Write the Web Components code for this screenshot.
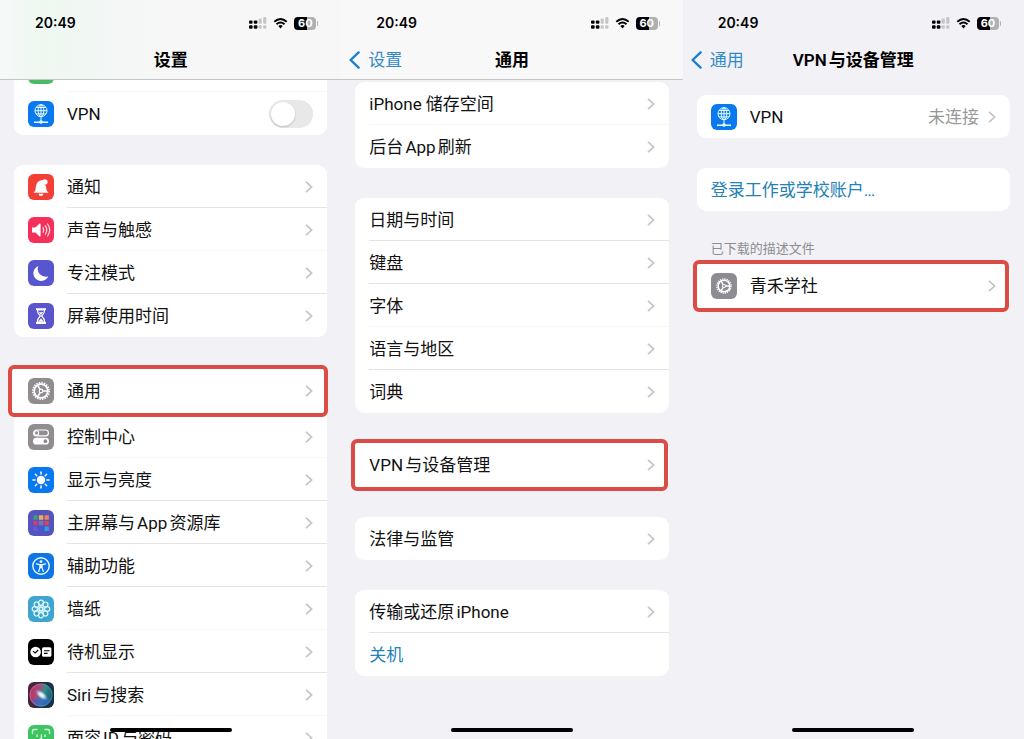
<!DOCTYPE html>
<html lang="zh-CN">
<head>
<meta charset="utf-8">
<meta name="viewport" content="width=device-width, initial-scale=1">
<title>设置</title>
<style>
    body {
        margin: 0;
        display: grid;
        grid-template-columns: repeat(3, 1fr);
        height: 100vh;
        overflow: hidden;
        background: #f2f1f6;
        color: #111;
        font: 17px/22px Roboto, "Noto Sans CJK SC", sans-serif;
        text-autospace: normal;
    }
</style>
</head>
<body>
    <phone-screen style="--list-top: -31px; --bar: linear-gradient(90deg, #f7f9f8, #eef8f1 12%, #f5f7f6 36%, #f7f7f7 60%, #f7f7f8); --line: #c6c6c9">
        <nav-bar slot="bar" title-text="设置"></nav-bar>
        <settings-group>
            <settings-row icon="green" soft></settings-row>
            <settings-row icon="vpn" type="toggle">VPN</settings-row>
        </settings-group>
        <settings-group>
            <settings-row icon="bell">通知</settings-row>
            <settings-row icon="sound" soft>声音与触感</settings-row>
            <settings-row icon="moon">专注模式</settings-row>
            <settings-row icon="hourglass">屏幕使用时间</settings-row>
        </settings-group>
        <settings-group style="--marked-height: 48px; --mark-inset: -2px -1px -2px -6px">
            <settings-row icon="gear" marked>通用</settings-row>
            <settings-row icon="switches" soft>控制中心</settings-row>
            <settings-row icon="sun">显示与亮度</settings-row>
            <settings-row icon="apps">主屏幕与App资源库</settings-row>
            <settings-row icon="access">辅助功能</settings-row>
            <settings-row icon="flower" soft>墙纸</settings-row>
            <settings-row icon="standby">待机显示</settings-row>
            <settings-row icon="siri" soft>Siri与搜索</settings-row>
            <settings-row icon="face">面容ID与密码</settings-row>
        </settings-group>
    </phone-screen>

    <phone-screen style="--list-top: 2px; --bar: #f8f8f9; --line: #c6c6c9">
        <nav-bar slot="bar" title-text="通用" back="设置"></nav-bar>
        <settings-group>
            <settings-row soft>iPhone 储存空间</settings-row>
            <settings-row>后台App刷新</settings-row>
        </settings-group>
        <settings-group>
            <settings-row>日期与时间</settings-row>
            <settings-row>键盘</settings-row>
            <settings-row soft>字体</settings-row>
            <settings-row>语言与地区</settings-row>
            <settings-row>词典</settings-row>
        </settings-group>
        <settings-group>
            <settings-row marked>VPN与设备管理</settings-row>
        </settings-group>
        <settings-group>
            <settings-row>法律与监管</settings-row>
        </settings-group>
        <settings-group>
            <settings-row>传输或还原iPhone</settings-row>
            <settings-row type="action">关机</settings-row>
        </settings-group>
    </phone-screen>

    <phone-screen style="--list-top: 15px">
        <nav-bar slot="bar" title-text="VPN与设备管理" back="通用"></nav-bar>
        <settings-group>
            <settings-row icon="vpn" value="未连接">VPN</settings-row>
        </settings-group>
        <settings-group>
            <settings-row type="action">登录工作或学校账户…</settings-row>
        </settings-group>
        <settings-group caption="已下载的描述文件">
            <settings-row icon="cog" marked>青禾学社</settings-row>
        </settings-group>
    </phone-screen>

<script>
const petals = [0, 45, 90, 135, 180, 225, 270, 315];

const gear = (scale) => `
    <g transform="translate(13 13) scale(${scale})" fill="none" stroke="#fff">
        <circle r="8.2" stroke-width="1.6" stroke-dasharray="1.5 1.08"/>
        <circle r="6.8" stroke-width="1.7"/>
        <circle r="1.8" stroke-width="1.2"/>
        <path d="M1.8 0H6.6M-.9 1.6L-3.3 5.7M-.9-1.6L-3.3-5.7" stroke-width="1.5"/>
    </g>`;

const ICONS = {
    green: ['#4fb868', ''],
    vpn: ['#0a78ee', `
        <g fill="none" stroke="#e6ffff" stroke-width="1">
            <circle cx="13" cy="9.7" r="6"/>
            <ellipse cx="13" cy="9.7" rx="2.8" ry="6"/>
            <path d="M7 9.7h12M8.1 6.5h9.8M8.1 12.9h9.8M13 3.7v17"/>
            <path d="M6 21.2h14" stroke-width="1.4"/>
        </g>
        <circle cx="13" cy="21" r="1.8" fill="#e6ffff"/>`],
    bell: ['#f43f37', `
        <path d="M5.4 18.8c2.2-1.8 2-3.4 2.5-6.4.5-3.3 2-5.4 4.6-6 1.2-.4 2.3-.2 3.2.1a3.9 3.9 0 0 0 2.2 5.3c.3 3.6.7 5.2 2.7 7z" fill="#fff"/>
        <path d="M10.6 19.8h4.8a2.4 2.2 0 0 1-4.8 0z" fill="#fff"/>
        <circle cx="16.8" cy="8" r="2.8" fill="#fff"/>`],
    sound: ['#f5305b', `
        <path d="M4 10.4h3.4l4.2-3.8c.5-.4 1-.2 1 .4v12c0 .6-.5.8-1 .4l-4.2-3.8H4z" fill="#fff"/>
        <g fill="none" stroke="#fff" stroke-linecap="round" stroke-width="1.2" opacity=".85">
            <path d="M15 10.7q1.6 2.3 0 4.6M17.3 8.8q3 4.2 0 8.4M19.6 7q4.2 6 0 12"/>
        </g>`],
    moon: ['#5856ce', '<path d="M10.4 6a7.7 7.7 0 0 0 9.8 10.2A7.7 7.7 0 1 1 10.4 6z" fill="#fff"/>'],
    hourglass: ['#5a55cc', `
        <path d="M8 5.2h10v1.9H8zM8 19h10v1.9H8z" fill="#fff"/>
        <path d="M9.4 7c0 3.4 1.1 4.3 2.9 6-1.8 1.7-2.9 2.6-2.9 6h7.2c0-3.4-1.1-4.3-2.9-6 1.8-1.7 2.9-2.6 2.9-6z" fill="none" stroke="#fff" stroke-width="1.2"/>
        <path d="M10.8 9.2h4.4L13 12zM10.5 18.5l2.5-3.2 2.5 3.2z" fill="#fff"/>`],
    gear: ['#918c90', gear(1)],
    cog: ['#8e8c93', gear(.86)],
    switches: ['#918c90', `
        <rect x="5.6" y="6" width="14.8" height="5.8" rx="2.9" fill="none" stroke="#fff" stroke-width="1.2"/>
        <circle cx="8.5" cy="8.9" r="2.1" fill="none" stroke="#fff" stroke-width="1.1"/>
        <rect x="5" y="13.8" width="16" height="6.8" rx="3.4" fill="#fff"/>
        <circle cx="17.4" cy="17.2" r="1.9" fill="#918c90"/>`],
    sun: ['#0a78ee', `
        <circle cx="13" cy="13" r="4.2" fill="#fff"/>
        <g stroke="#fff" stroke-width="1.5" stroke-linecap="round">
            ${petals.map(a => `<path d="M13 5v2" transform="rotate(${a} 13 13)"/>`).join('')}
        </g>`],
    apps: ['#5553bd', ['#3e9c80', '#ecad56', '#e88357', '#d43c75', '#7a77a8', '#df4258', '#6656d8', '#3e58d8', '#2d9dda']
        .map((c, i) => `<rect x="${5.3 + i % 3 * 5.6}" y="${5.3 + Math.floor(i / 3) * 5.6}" width="4.4" height="4.4" rx=".5" fill="${c}"/>`).join('')],
    access: ['#0f75e6', `
        <circle cx="13" cy="13" r="8.2" fill="none" stroke="#e8fbff" stroke-width="1.4"/>
        <circle cx="13" cy="8.6" r="1.4" fill="#e8fbff"/>
        <path d="M8.4 10.8l3.4.8h2.4l3.4-.8M11.9 11.6v3l-1.2 3.9M14.1 11.6v3l1.2 3.9M13 11.6v3.2" fill="none" stroke="#e8fbff" stroke-width="1.2" stroke-linecap="round"/>`],
    flower: ['#3fa5d0', `
        <g fill="none" stroke="#dffaff" stroke-width="1.2">
            ${petals.map(a => `<ellipse cx="13" cy="6.8" rx="2.4" ry="2.6" transform="rotate(${a} 13 13)"/><path d="M13 9.5V12" transform="rotate(${a} 13 13)"/>`).join('')}
            <circle cx="13" cy="13" r="2"/>
        </g>`],
    standby: ['#000', `
        <circle cx="7.6" cy="13" r="5.3" fill="#fff"/>
        <path d="M5 12.1l2.2 1.8 3-2.9" fill="none" stroke="#000" stroke-width="1.1"/>
        <rect x="14" y="8.2" width="9.4" height="9.6" rx="1.6" fill="#fff"/>
        <path d="M16 11.8h5.6M16 14.4h3.6" stroke="#000" stroke-width="1.1"/>`],
    siri: ['linear-gradient(100deg, #55203e, #24304a 55%, #0d3442)', `
        <defs>
            <linearGradient id="orb" x1="0" y1=".3" x2="1" y2=".6"><stop stop-color="#c9305f"/><stop offset=".4" stop-color="#a04c7c"/><stop offset=".6" stop-color="#2f8f86"/><stop offset="1" stop-color="#1a5570"/></linearGradient>
            <radialGradient id="glow"><stop stop-color="#fff"/><stop offset=".4" stop-color="#e2f2ff" stop-opacity=".85"/><stop offset="1" stop-color="#6aa7e8" stop-opacity="0"/></radialGradient>
        </defs>
        <circle cx="13" cy="13" r="11.6" fill="url(#orb)"/>
        <path d="M4 18q9-1 19-2-2 8.4-10 8.4-6 0-9-6.400z" fill="#3565d2" opacity=".7"/>
        <ellipse cx="13.500" cy="13" rx="8" ry="4" fill="url(#glow)" transform="rotate(38 13.5 13)"/>
        <circle cx="13" cy="13" r="11" fill="none" stroke="#9cc0c8" stroke-width=".7" opacity=".45"/>`],
    face: ['#3fc463', `
        <g fill="none" stroke="#c8ffd6" stroke-width="1.4" stroke-linecap="round">
            <path d="M4.5 8.5V6q0-1.5 1.5-1.5h3M17 4.5h3q1.5 0 1.5 1.5v2.5M4.5 17.5V20q0 1.5 1.5 1.5h3M17 21.5h3q1.5 0 1.5-1.5v-2.5M9 10v1.4M17 10v1.4M13.4 10v3.6h-1M10 16.4q3 2 6 0"/>
        </g>`]
};

class AppIcon extends HTMLElement {
    constructor() {
        super();
        this.attachShadow({ mode: 'open' });
    }

    connectedCallback() {
        const [color, art] = ICONS[this.getAttribute('name')];
        this.shadowRoot.innerHTML = `
            <style>
                :host { display: block; flex: none; width: 26px; height: 26px; border-radius: 6px; overflow: hidden; background: ${color}; }
                svg { display: block; }
            </style>
            <svg viewBox="0 0 26 26" width="26" height="26" aria-hidden="true">${art}</svg>
        `;
    }
}

class SettingsRow extends HTMLElement {
    constructor() {
        super();
        this.attachShadow({ mode: 'open' });
    }

    connectedCallback() {
        const icon = this.getAttribute('icon');
        const type = this.getAttribute('type') || 'link';
        const value = this.getAttribute('value');
        const tag = { link: 'a href="#"', toggle: 'label', action: 'button type="button"' }[type];

        this.shadowRoot.innerHTML = `
            <style>
                :host { display: block; position: relative; isolation: isolate; }
                .row {
                    box-sizing: border-box;
                    display: flex;
                    align-items: center;
                    gap: 13px;
                    width: 100%;
                    min-height: 43px;
                    padding: 0 14px;
                    border: 0;
                    background: none;
                    color: inherit;
                    font: inherit;
                    text-align: left;
                    text-decoration: none;
                    text-autospace: inherit;
                }
                button.row { color: #2381b4; }
                .text { flex: 1; white-space: nowrap; }
                .value { color: #98989b; }
                .chevron { flex: none; margin-left: -4px; }
                input {
                    appearance: none;
                    display: flex;
                    width: 44px;
                    height: 28px;
                    margin: 0;
                    padding: 1px;
                    box-sizing: border-box;
                    border-radius: 14px;
                    background: #e8e8e9;
                }
                input::before {
                    content: "";
                    width: 24px;
                    height: 24px;
                    margin: 1px;
                    border-radius: 50%;
                    background: #fff;
                    box-shadow: 0 1px 2px #0003;
                }
                input:checked { justify-content: flex-end; background: #34c759; }
                /* hairline starts where the label does */
                :host(:not(:last-child):not([marked]))::after {
                    content: "";
                    position: absolute;
                    inset: auto 0 0 ${icon ? 67 - 14 : 14}px;
                    height: 1px;
                    background: #e4e4e6;
                }
                :host([soft]:not(:last-child))::after { background: #f8f8f9; }
                :host([marked]) { z-index: 1; }
                :host([marked]) .row { min-height: var(--marked-height, 44px); }
                :host([marked])::before {
                    content: "";
                    position: absolute;
                    z-index: -1;
                    inset: var(--mark-inset, -4px 1px -4px -4px);
                    border: 4px solid #dc4c46;
                    border-radius: 6px;
                    background: #fff;
                }
            </style>
            <${tag} class="row">
                ${icon ? `<app-icon name="${icon}"></app-icon>` : ''}
                <span class="text"><slot></slot></span>
                ${value ? `<span class="value">${value}</span>` : ''}
                ${type === 'toggle' ? '<input type="checkbox" role="switch">' : ''}
                ${type === 'link' ? `
                    <svg class="chevron" width="8" height="12" viewBox="0 0 8 12" fill="none" stroke="#c4c4c7" stroke-width="1.7" aria-hidden="true">
                        <path d="M1 .8l5.600 5.200L1 11.200"/>
                    </svg>` : ''}
            </${tag.split(' ')[0]}>
        `;
    }
}

class SettingsGroup extends HTMLElement {
    constructor() {
        super();
        this.attachShadow({ mode: 'open' });
    }

    connectedCallback() {
        const caption = this.getAttribute('caption');
        this.shadowRoot.innerHTML = `
            <style>
                :host { display: block; }
                h2 { margin: 0; padding: 0 14px 7px; color: #8d8d92; font-size: 13px; font-weight: 400; line-height: 16px; }
                .card { border-radius: 9px; background: #fff; }
            </style>
            ${caption ? `<h2>${caption}</h2>` : ''}
            <div class="card"><slot></slot></div>
        `;
    }
}

class StatusBar extends HTMLElement {
    constructor() {
        super();
        this.attachShadow({ mode: 'open' });
        this.shadowRoot.innerHTML = `
            <style>
                :host { display: flex; align-items: center; gap: 6px; padding: 14px 23px 0 35px; color: #000; }
                time { flex: 1; font: 600 14px/18px Inter, sans-serif; }
                .battery {
                    position: relative;
                    width: 22px;
                    height: 13px;
                    margin-right: 2px;
                    border-radius: 4px;
                    background: linear-gradient(90deg, #000 60%, #b0b0b2 60%);
                    color: #fff;
                    font: 700 11px/13px Inter, sans-serif;
                    text-align: center;
                }
                .battery::after {
                    content: "";
                    position: absolute;
                    inset: 4px -2px 4px auto;
                    width: 1px;
                    border-radius: 1px;
                    background: #b5b5b7;
                }
            </style>
            <time>20:49</time>
            <svg width="18" height="12" viewBox="0 0 18 12" aria-hidden="true">
                <g fill="#000">
                    <rect y="3.4" width="3.6" height="3.4" rx="1"/><rect y="8.2" width="3.6" height="3.6" rx="1"/>
                    <rect x="4.8" y="3.4" width="3.6" height="3.4" rx="1"/><rect x="4.8" y="8.2" width="3.6" height="3.6" rx="1"/>
                </g>
                <g fill="#c6c6c8">
                    <rect x="9.6" y="1.6" width="3.2" height="5.2" rx="1"/><rect x="9.6" y="8.2" width="3.2" height="3.6" rx="1"/>
                    <rect x="14.2" width="3.2" height="6.8" rx="1"/><rect x="14.2" y="8.2" width="3.2" height="3.6" rx="1"/>
                </g>
            </svg>
            <svg width="15" height="11" viewBox="0 0 14 11" fill="none" stroke="#000" aria-hidden="true">
                <path d="M.8 3.8Q7-1.8 13.2 3.8M3 6.2q4-3.4 8 0" stroke-width="1.9"/>
                <path d="M4.8 8q2.2-1.8 4.4 0L7 10.6z" fill="#000" stroke="none"/>
            </svg>
            <span class="battery">60</span>
        `;
    }
}

class NavBar extends HTMLElement {
    constructor() {
        super();
        this.attachShadow({ mode: 'open' });
    }

    connectedCallback() {
        const back = this.getAttribute('back');
        this.shadowRoot.innerHTML = `
            <style>
                :host {
                    display: block;
                    box-sizing: border-box;
                    height: 80px;
                    border-bottom: 1px solid var(--line, transparent);
                    background: var(--bar, #f2f1f6);
                }
                nav { display: grid; grid-template-columns: 1fr auto 1fr; align-items: center; padding: 17px 8px 0; }
                a { display: flex; align-items: center; gap: 8px; color: #318bc6; text-decoration: none; }
                h1 { grid-column: 2; margin: 0; color: #000; font-size: 17px; font-weight: 600; line-height: 22px; }
            </style>
            <status-bar></status-bar>
            <nav>
                ${back ? `
                    <a href="#">
                        <svg width="11" height="18" viewBox="0 0 11 18" fill="none" stroke="#197fd0" stroke-width="2.4" stroke-linecap="round" stroke-linejoin="round" aria-hidden="true">
                            <path d="M9.6 1.4L1.6 9l8 7.6"/>
                        </svg>
                        <span>${back}</span>
                    </a>` : ''}
                <h1>${this.getAttribute('title-text')}</h1>
            </nav>
        `;
    }
}

class PhoneScreen extends HTMLElement {
    constructor() {
        super();
        this.attachShadow({ mode: 'open' });
        this.shadowRoot.innerHTML = `
            <style>
                :host { display: block; position: relative; min-width: 0; overflow: hidden; }
                header { position: relative; z-index: 2; }
                main { display: flex; flex-direction: column; gap: 30px; margin-top: var(--list-top); padding: 0 14px; }
                /* home indicator */
                .home {
                    position: absolute;
                    z-index: 3;
                    bottom: 7px;
                    left: 50%;
                    width: 122px;
                    height: 4px;
                    border-radius: 2px;
                    background: #000;
                    transform: translateX(-50%);
                }
            </style>
            <header><slot name="bar"></slot></header>
            <main><slot></slot></main>
            <div class="home"></div>
        `;
    }
}

customElements.define('app-icon', AppIcon);
customElements.define('settings-row', SettingsRow);
customElements.define('settings-group', SettingsGroup);
customElements.define('status-bar', StatusBar);
customElements.define('nav-bar', NavBar);
customElements.define('phone-screen', PhoneScreen);
</script>
</body>
</html>
